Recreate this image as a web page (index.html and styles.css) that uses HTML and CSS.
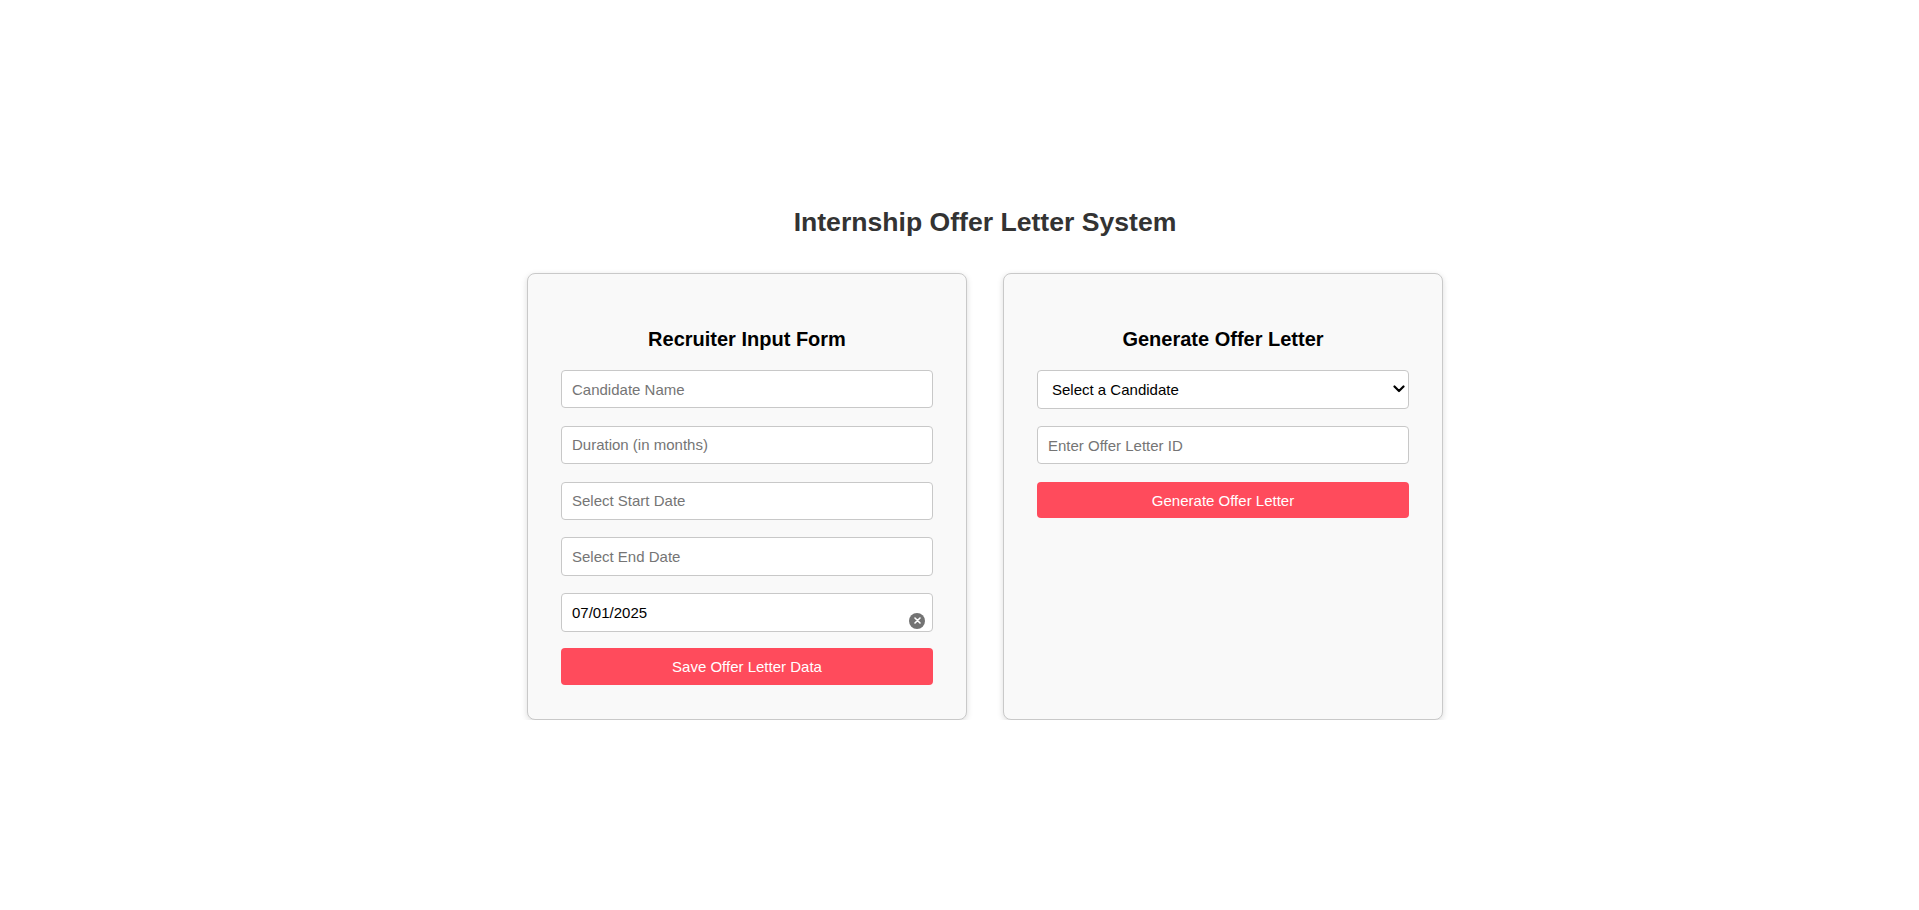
FILE: index.html
```html
<!DOCTYPE html>
<html lang="en">
<head>
<meta charset="utf-8">
<title>Internship Offer Letter System</title>
<link rel="stylesheet" href="styles.css">
</head>
<body>
<main class="page">
  <h1 class="title">Internship Offer Letter System</h1>
  <div class="cards">
    <section class="card">
      <h3 class="card-title">Recruiter Input Form</h3>
      <form class="form">
        <input class="field" type="text" placeholder="Candidate Name">
        <input class="field" type="text" placeholder="Duration (in months)">
        <input class="field" type="text" placeholder="Select Start Date">
        <input class="field" type="text" placeholder="Select End Date">
        <div class="date-wrap">
          <input class="field field-date" type="text" value="07/01/2025">
          <span class="clear-btn"><svg width="7" height="7" viewBox="0 0 7 7"><path d="M1 1L6 6M6 1L1 6" stroke="#fff" stroke-width="1.6" stroke-linecap="round"/></svg></span>
        </div>
        <button class="btn" type="button">Save Offer Letter Data</button>
      </form>
    </section>
    <section class="card">
      <h3 class="card-title">Generate Offer Letter</h3>
      <form class="form">
        <div class="select-wrap">
          <select class="field field-select">
            <option>Select a Candidate</option>
          </select>
          <svg class="chevron" width="12" height="8" viewBox="0 0 12 8"><path d="M1.5 1.5L6 6L10.5 1.5" fill="none" stroke="#000" stroke-width="2.2" stroke-linecap="round" stroke-linejoin="round"/></svg>
        </div>
        <input class="field" type="text" placeholder="Enter Offer Letter ID">
        <button class="btn" type="button">Generate Offer Letter</button>
      </form>
    </section>
  </div>
</main>
</body>
</html>
```
FILE: styles.css
```css
html, body {
  margin: 0;
  padding: 0;
  background: #ffffff;
}

body {
  font-family: "Liberation Sans", Arial, sans-serif;
}

.page {
  padding: 207px 0 0 51px;
  display: flex;
  flex-direction: column;
  align-items: center;
}

.title {
  margin: 0 0 35px;
  font-size: 26.6px;
  line-height: 31px;
  font-weight: bold;
  color: #333333;
}

.cards {
  display: flex;
  gap: 36px;
}

.card {
  box-sizing: border-box;
  width: 440px;
  padding: 33px 33px 34px;
  background: #f9f9f9;
  border: 1px solid #c9c9c9;
  border-radius: 8px;
  box-shadow: 0 2px 6px rgba(0, 0, 0, 0.14);
}

.card-title {
  margin: 21px 0 19px;
  font-size: 20px;
  line-height: 23px;
  font-weight: bold;
  text-align: center;
  color: #000000;
}

.form {
  display: flex;
  flex-direction: column;
  gap: 17.4px;
  margin: 0;
}

.field {
  box-sizing: border-box;
  width: 100%;
  height: 38.4px;
  margin: 0;
  padding: 0 10px;
  font-family: "Liberation Sans", Arial, sans-serif;
  font-size: 15px;
  color: #000000;
  background: #ffffff;
  border: 1px solid #c8c8c8;
  border-radius: 4px;
  outline: none;
}

.field::placeholder {
  color: #757575;
}

.date-wrap,
.select-wrap {
  position: relative;
}

.date-wrap {
  margin-bottom: -1px;
}

.select-wrap {
  display: flex;
}

.clear-btn {
  position: absolute;
  right: 8px;
  bottom: 3px;
  width: 16px;
  height: 16px;
  border-radius: 50%;
  background: #737373;
  display: flex;
  align-items: center;
  justify-content: center;
}

.field-select {
  appearance: none;
  -webkit-appearance: none;
  padding: 0 14px;
  height: 38.6px;
}

.chevron {
  position: absolute;
  right: 4px;
  top: 15px;
}

.btn {
  box-sizing: border-box;
  width: 100%;
  height: 36.7px;
  padding: 0;
  font-family: "Liberation Sans", Arial, sans-serif;
  font-size: 15px;
  color: #ffffff;
  background: #ff4b5c;
  border: none;
  border-radius: 4px;
}
```
